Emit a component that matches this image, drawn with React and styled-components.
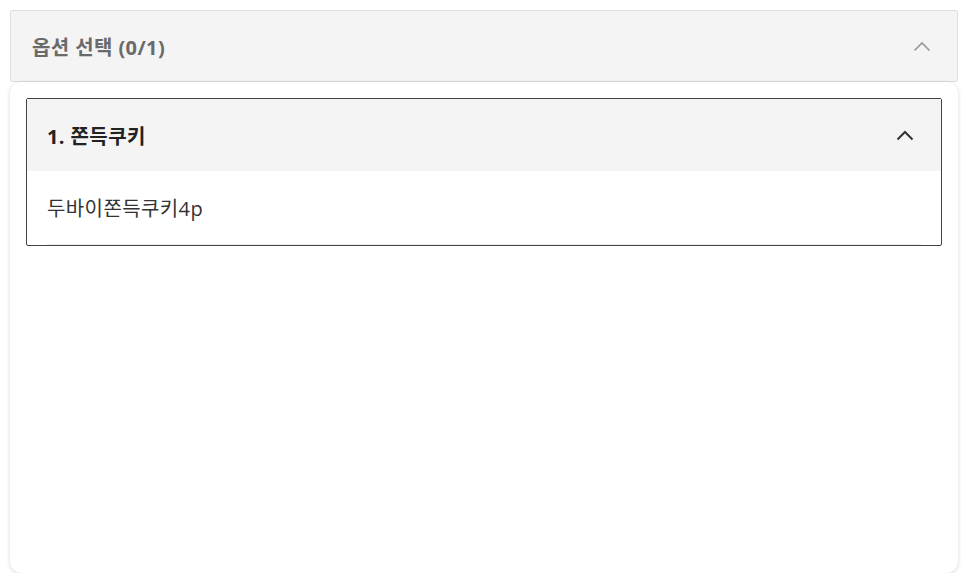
import React from "react";
import styled, { createGlobalStyle } from "styled-components";

const Global = createGlobalStyle`
  html, body { margin: 0; padding: 0; background: #fff; }
  body { font-family: "Open Sans", "Noto Sans CJK KR", sans-serif; }
  * { box-sizing: border-box; }
`;

const Page = styled.div`
  padding: 10px 8px 0 10px;
  width: 966px;
`;

const Selector = styled.div`
  display: flex;
  flex-direction: column;
  width: 948px;
`;

const SelectHeader = styled.div`
  height: 72px;
  display: flex;
  align-items: center;
  justify-content: space-between;
  padding: 0 26px 0 21px;
  background: #f4f4f4;
  border: 1px solid #dedede;
  border-radius: 2px;
  color: #6a6a6a;
  font-size: 20px;
  font-weight: 700;
  letter-spacing: 0.4px;
`;

const Panel = styled.div`
  height: 491px;
  background: #fff;
  border-radius: 12px;
  box-shadow: 0 1px 4px rgba(0, 0, 0, 0.16);
  padding: 16px;
`;

const Group = styled.div`
  border: 1px solid #444;
  border-radius: 2px;
  background: #fff;
`;

const GroupHeader = styled.div`
  height: 72px;
  display: flex;
  align-items: center;
  justify-content: space-between;
  padding: 0 27px 0 20px;
  background: #f4f4f4;
  color: #222;
  font-size: 20px;
  font-weight: 700;
  letter-spacing: 0.4px;
`;

const Item = styled.div`
  margin: 0 20px;
  height: 74px;
  display: flex;
  align-items: center;
  border-bottom: 1px solid #ececec;
  color: #333;
  font-size: 20px;
  letter-spacing: 0.4px;
  padding-bottom: 1px;
`;

const Chevron = ({ color, width = 2 }) => (
  <svg width="18" height="11" viewBox="0 0 18 11" fill="none">
    <path d="M1.5 9.5L9 2L16.5 9.5" stroke={color} strokeWidth={width} />
  </svg>
);

export default function App() {
  return (
    <>
      <Global />
      <Page>
        <Selector>
          <SelectHeader>
            <span>옵션 선택 (0/1)</span>
            <Chevron color="#9a9a9a" width={1.7} />
          </SelectHeader>
          <Panel>
            <Group>
              <GroupHeader>
                <span>1. 쫀득쿠키</span>
                <Chevron color="#333" />
              </GroupHeader>
              <Item>두바이쫀득쿠키4p</Item>
            </Group>
          </Panel>
        </Selector>
      </Page>
    </>
  );
}
